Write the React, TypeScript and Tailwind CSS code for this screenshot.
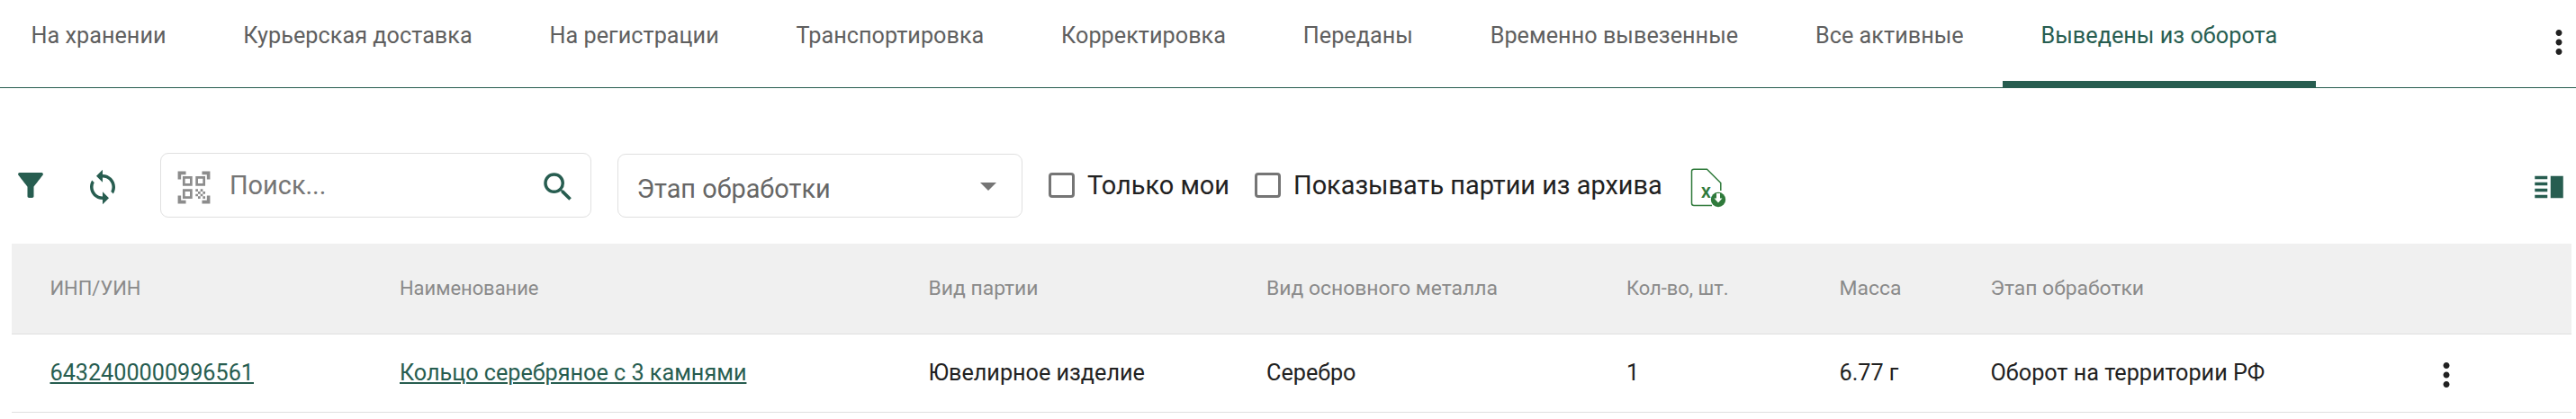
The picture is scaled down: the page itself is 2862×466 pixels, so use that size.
import React from "react";

const GREEN = "#275d50";

const tabs = [
  "На хранении",
  "Курьерская доставка",
  "На регистрации",
  "Транспортировка",
  "Корректировка",
  "Переданы",
  "Временно вывезенные",
  "Все активные",
  "Выведены из оборота",
];

function Icon({ d, className, fill = GREEN }: { d: string; className: string; fill?: string }) {
  return (
    <svg viewBox="0 0 24 24" className={className} fill={fill} aria-hidden="true">
      <path d={d} />
    </svg>
  );
}

const MORE =
  "M12 8c1.1 0 2-.9 2-2s-.9-2-2-2-2 .9-2 2 .9 2 2 2zm0 2c-1.1 0-2 .9-2 2s.9 2 2 2 2-.9 2-2-.9-2-2-2zm0 6c-1.1 0-2 .9-2 2s.9 2 2 2 2-.9 2-2-.9-2-2-2z";
const FILTER =
  "M4.25 5.61C6.27 8.2 10 13 10 13v6c0 .55.45 1 1 1h2c.55 0 1-.45 1-1v-6s3.72-4.8 5.74-7.39A.998.998 0 0 0 18.95 4H5.04c-.83 0-1.3.95-.79 1.61z";
const SYNC =
  "M12 4V1L8 5l4 4V6c3.31 0 6 2.69 6 6 0 1.01-.25 1.97-.7 2.8l1.46 1.46C19.54 15.03 20 13.57 20 12c0-4.42-3.58-8-8-8zm0 14c-3.31 0-6-2.69-6-6 0-1.01.25-1.97.7-2.8L5.24 7.74C4.46 8.97 4 10.43 4 12c0 4.42 3.58 8 8 8v3l4-4-4-4v3z";
const QR =
  "M9.5 6.5v3h-3v-3h3M11 5H5v6h6V5zm-1.5 9.5v3h-3v-3h3M11 13H5v6h6v-6zm6.5-6.5v3h-3v-3h3M19 5h-6v6h6V5zm-6 8h1.5v1.5H13V13zm1.5 1.5H16V16h-1.5v-1.5zM16 13h1.5v1.5H16V13zm-3 3h1.5v1.5H13V16zm1.5 1.5H16V19h-1.5v-1.5zM16 16h1.5v1.5H16V16zm1.5-1.5H19V16h-1.5v-1.5zm0 3H19V19h-1.5v-1.5zM22 7h-2V4h-3V2h5v5zm0 15v-5h-2v3h-3v2h5zM2 22h5v-2H4v-3H2v5zM2 2v5h2V4h3V2H2z";
const SEARCH =
  "M15.5 14h-.79l-.28-.27A6.471 6.471 0 0 0 16 9.5 6.5 6.5 0 1 0 9.5 16c1.61 0 3.09-.59 4.23-1.57l.27.28v.79l5 4.99L20.49 19l-4.99-5zm-6 0C7.01 14 5 11.99 5 9.5S7.01 5 9.5 5 14 7.01 14 9.5 11.99 14 9.5 14z";
const SPLIT =
  "M3 15h8v-2H3v2zm0 4h8v-2H3v2zm0-8h8V9H3v2zm0-6v2h8V5H3zm10 0h8v14h-8V5z";

function ExcelIcon() {
  return (
    <svg viewBox="0 0 44 44" className="ml-[31.5px] mt-[17px] h-[44px] w-[44px] shrink-0 self-start" aria-hidden="true">
      <path
        d="M24 41.5H4Q1.5 41.5 1.5 39V3.500Q1.5 1.300 4 1.300H18.500L33.800 16.500V25"
        fill="none"
        stroke="#2f7a3b"
        strokeWidth="1.5"
      />
      <text x="17.300" y="33" textAnchor="middle" fontFamily="Roboto, sans-serif" fontWeight="700" fontSize="17" fill="#2f7a3b">
        X
      </text>
      <circle cx="31" cy="35" r="8.200" fill="#2f7a3b" />
      <path d="M29 28h4v5.500h2.500L31 38.500 26.500 33.500H29z" fill="#fff" />
    </svg>
  );
}

function Checkbox({ label }: { label: string }) {
  return (
    <label className="flex shrink-0 items-center">
      <span className="h-[28px] w-[29px] rounded-[4px] border-[3.5px] border-[#757575]" />
      <span className="ml-[14px] whitespace-nowrap text-[28.9px] leading-[72px] text-[#212121]">{label}</span>
    </label>
  );
}

const cols =
  "grid grid-cols-[388.5px_587.5px_375.5px_400px_236.500px_168px_485px_1fr] pl-[42.500px]";

const headers = [
  { t: "ИНП/УИН", wide: false },
  { t: "Наименование", wide: false },
  { t: "Вид партии", wide: true },
  { t: "Вид основного металла", wide: true },
  { t: "Кол-во, шт.", wide: false },
  { t: "Масса", wide: true },
  { t: "Этап обработки", wide: true },
];

export default function App() {
  return (
    <div className="h-[466px] w-full overflow-hidden bg-white font-['Roboto',sans-serif] text-[#212121]">
      <nav className="flex h-[98px] items-start justify-between border-b border-[#275d50]">
        <div className="-ml-[8.5px] flex">
          {tabs.map((t, i) => {
            const active = i === tabs.length - 1;
            return (
              <div
                key={t}
                className={
                  "h-[97px] whitespace-nowrap px-[42.9px] text-[25.2px] leading-[80px] tracking-[0.04px] " +
                  (active ? "border-b-[7px] border-[#275d50] text-[#275d50]" : "text-[#5f5f5f]")
                }
              >
                {t}
              </div>
            );
          })}
        </div>
        <Icon d={MORE} fill="#212121" className="mr-[-2px] mt-[26px] h-[42px] w-[42px] shrink-0" />
      </nav>

      <div className="mt-[72px] flex h-[72px] items-center">
        <Icon d={FILTER} className="ml-[13px] h-[42px] w-[42px] shrink-0" />
        <Icon d={SYNC} className="ml-[37.5px] mt-[4px] h-[42px] w-[42px] shrink-0" />
        <div className="ml-[43.5px] flex h-[72px] w-[479px] shrink-0 items-center rounded-[9px] border border-[#e0e0e0]">
          <Icon d={QR} fill="#8c8c8c" className="ml-[14.5px] mt-[5px] h-[43px] w-[43px]" />
          <span className="ml-[18.5px] flex-1 text-[28.9px] leading-[70px] text-[#757575]">Поиск...</span>
          <Icon d={SEARCH} className="mr-[15px] mt-[4px] h-[42px] w-[42px]" />
        </div>
        <div className="ml-[29px] mt-[1px] flex h-[71px] w-[450px] shrink-0 items-center rounded-[9px] border border-[#e0e0e0]">
          <span className="ml-[20.5px] mt-[7px] flex-1 text-[28.9px] leading-[60px] text-[#666666]">
            Этап обработки
          </span>
          <svg viewBox="0 0 18 9" className="mr-[28px] mt-[1px] h-[9px] w-[18px]" fill="#757575" aria-hidden="true">
            <path d="M0 0h18L9 9z" />
          </svg>
        </div>
        <div className="ml-[29px] flex shrink-0 gap-[28px]">
          <Checkbox label="Только мои" />
          <Checkbox label="Показывать партии из архива" />
        </div>
        <ExcelIcon />
        <Icon d={SPLIT} className="ml-auto mr-[9px] mt-[4px] h-[42px] w-[42px] shrink-0" />
      </div>

      <div className="ml-[13px] mr-[5px] mt-[29px]">
        <div className={cols + " h-[101px] border-b border-[#e0e0e0] bg-[#f0f0f0]"}>
          {headers.map((h) => (
            <div
              key={h.t}
              className={
                "whitespace-nowrap leading-[100px] text-[#8a8a8a] " + (h.wide ? "text-[22.9px]" : "text-[21.9px]")
              }
            >
              {h.t}
            </div>
          ))}
        </div>
        <div
          className={
            cols + " h-[87px] whitespace-nowrap border-b border-[#e0e0e0] text-[25.2px] leading-[85px]"
          }
        >
          <div>
            <a className="text-[#275d50] underline decoration-2 underline-offset-2">6432400000996561</a>
          </div>
          <div>
            <a className="text-[#275d50] underline decoration-2 underline-offset-2">Кольцо серебряное с 3 камнями</a>
          </div>
          <div>Ювелирное изделие</div>
          <div>Серебро</div>
          <div>1</div>
          <div>6.77 г</div>
          <div>Оборот на территории РФ</div>
          <Icon d={MORE} fill="#212121" className="mt-[24px] h-[42px] w-[42px]" />
        </div>
      </div>
    </div>
  );
}
